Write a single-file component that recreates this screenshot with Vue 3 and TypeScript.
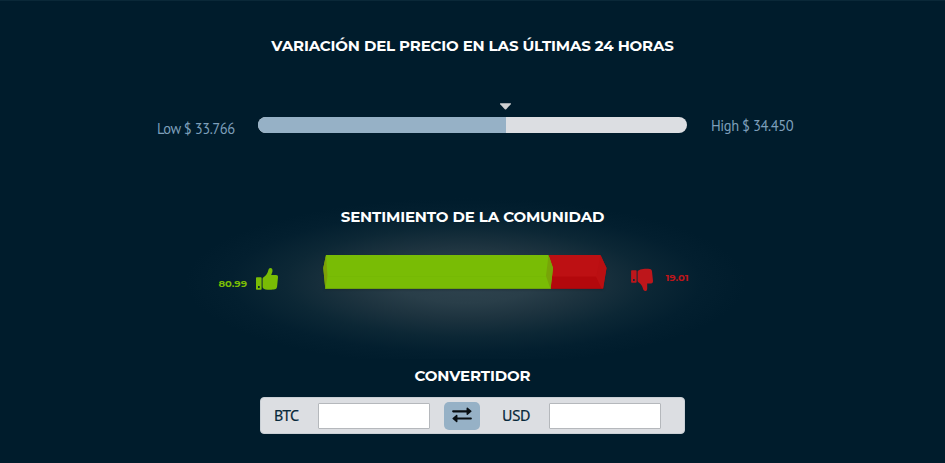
<script setup lang="ts">
import { ref } from 'vue'

const low = '33.766'
const high = '34.450'
const position = 57.8
const positive = '80.99'
const negative = '19.01'
const btc = ref('')
const usd = ref('')
</script>

<template>
  <main class="page">
    <section class="variation">
      <h2 class="title t-variation">VARIACIÓN DEL PRECIO EN LAS ÚLTIMAS 24 HORAS</h2>
      <div class="range">
        <span class="limit low">Low $ {{ low }}</span>
        <div class="track">
          <div class="fill" :style="{ width: position + '%' }"></div>
          <svg class="marker" :style="{ left: position + '%' }" width="12" height="7" viewBox="0 0 12 7">
            <path d="M.8.3h10.4q.6.3.1.9L6.7 6.2q-.7.6-1.4 0L.7 1.2Q.2.6.8.3z" fill="#cfd0d2" />
          </svg>
        </div>
        <span class="limit high">High $ {{ high }}</span>
      </div>
    </section>

    <section class="sentiment">
      <h2 class="title t-sentiment">SENTIMIENTO DE LA COMUNIDAD</h2>
      <div class="votes">
        <div class="vote up">
          <span class="percent">{{ positive }}</span>
          <svg width="24" height="24" viewBox="0 0 24 24">
            <path fill-rule="evenodd" d="M1.800 10.300h4q.8 0 .8.800v10.900q0 .8-.8.8h-4q-.8 0-.8-.8V11.100q0-.8.8-.8zM3 19v2h1.700V19z" />
            <path d="M7.600 11.900q0-1 .9-1.700C10.900 8.500 12.500 6.700 13.100 4 13.500 2.200 14.200 1 15.400 1c1.500 0 2.200 1.200 2.100 2.800-.1 1.700-.8 3-1.300 4.300h4.900c1.300 0 2 .9 1.900 2.200l-.9 9.100c-.2 1.600-1 2.500-2.300 2.900-2 .6-6.700.7-9.300.1-1.700-.4-2.900-1.100-2.900-2.300z" />
          </svg>
        </div>
        <svg class="prism" width="284" height="38" viewBox="0 0 284 38">
          <path d="M226 1h51.500l6 13-3.500 21H228z" fill="#bd1013" />
          <path d="M229 22.500h44l6 12.500h-51z" fill="#b3080c" />
          <path d="M277.500 1l6 13-3.500 21-6.500-13z" fill="#ba0f12" />
          <path d="M3 1h222.500l4.500 13-2.500 21H2.300L.3 14z" fill="#79bc05" />
          <path d="M3 1L.3 14l2 21L4.500 22z" fill="#7c9f09" />
          <path d="M225.500 1l4.500 13-2.500 21-4.500-13z" fill="#78a408" />
          <path d="M4 22.500h219" stroke="#76b805" stroke-width=".7" />
          <path d="M2.500 34.500h225.200" stroke="#6da30a" />
          <path d="M228 34.500h52" stroke="#9c0b12" />
        </svg>
        <div class="vote down">
          <svg width="24" height="24" viewBox="0 0 24 24">
            <path fill-rule="evenodd" d="M1.900 2.200h3.900q.8 0 .8.800v10.900q0 .8-.8.800H1.900q-.8 0-.8-.8V3q0-.8.8-.8zM3 11v2h1.700v-2z" />
            <path d="M7.600 3.700C7.600 2.600 9 1.900 10.400 1.400c2.600-.8 7-1 9.400-.4 1.400.3 2 1 2.200 2.400l1 9.600c.1 1.500-.6 2.400-2 2.400h-3.800v5c0 1.700-.7 2.600-2 2.600-1.200 0-1.900-.8-2.300-2.400-.6-2.500-1.700-4.600-4.200-6.100q-1.100-.7-1.100-1.800z" />
          </svg>
          <span class="percent">{{ negative }}</span>
        </div>
      </div>
    </section>

    <section class="converter">
      <h2 class="title t-converter">CONVERTIDOR</h2>
      <form class="exchange" @submit.prevent>
        <label class="btc" for="btc"><span>BTC</span></label>
        <input id="btc" v-model="btc" type="text" />
        <button type="button">
          <svg width="20" height="16" viewBox="0 0 20 16">
            <path d="M1.200 4.300h14M4.800 11.500h14" stroke="#080e12" stroke-width="2.200" stroke-linecap="round" />
            <path d="M15.300 1.300l3.500 3-3.500 3zM4.700 8.500l-3.500 3 3.500 3z" fill="#080e12" stroke="#080e12" stroke-width="1.500" stroke-linejoin="round" />
          </svg>
        </button>
        <label class="usd" for="usd"><span>USD</span></label>
        <input id="usd" v-model="usd" type="text" />
      </form>
    </section>
  </main>
</template>

<style>
body { margin: 0; background: #001c2c; }
</style>

<style scoped>
.page {
  box-sizing: border-box;
  width: 945px;
  height: 463px;
  overflow: hidden;
  background: #001c2c;
  border-top: 1px solid #0a2838;
}
.title {
  margin: 0;
  color: #fff;
  font: 700 15px/20px Montserrat, Inter, sans-serif;
  text-align: center;
  white-space: nowrap;
}
.variation { height: 179px; padding-top: 35px; box-sizing: border-box; }
.t-variation { letter-spacing: -.15px; }
.t-sentiment { letter-spacing: -.14px; }
.t-converter { letter-spacing: -.1px; }
.range { display: flex; padding-top: 61px; }
.limit {
  color: #7d9fba;
  font: 400 14.500px/20px "PT Sans", "Noto Sans", sans-serif;
  letter-spacing: -.42px;
  white-space: nowrap;
}
.low { width: 101px; padding: 2px 0 0 157px; }
.high { padding: 0 0 0 24px; margin-top: -1px; }
.track { position: relative; width: 429px; height: 16px; border-radius: 8px; background: #dcdee2; }
.fill { height: 16px; border-radius: 8px 0 0 8px; background: #96b1c6; }
.marker { position: absolute; top: -14px; transform: translateX(-6.500px); }
.sentiment {
  box-sizing: border-box;
  height: 179px;
  padding-top: 27px;
  background: radial-gradient(ellipse 280px 84px at 466px 102px, #2f434e 0%, #293e49 25%, #1d333f 43%, #0c2735 65%, #031f2f 84%, #001c2c 100%);
}
.votes { display: flex; align-items: flex-start; padding: 27px 0 0 218px; }
.vote { display: flex; }
.percent { font: 700 10px/14px Montserrat, Inter, sans-serif; }
.up { width: 105px; padding-top: 13px; color: #79bc05; fill: #79bc05; }
.up .percent { width: 37px; margin-top: 10px; }
.down { padding: 14px 0 0 23px; color: #bd161b; fill: #bd161b; }
.down .percent { margin: 3px 0 0 11px; }
.percent { transform: scaleY(.94) translateX(.4px); }
.prism { display: block; filter: drop-shadow(0 1px 1px #12212b70); }
.converter { padding-top: 7px; }
.exchange {
  box-sizing: border-box;
  display: flex;
  align-items: center;
  width: 425px;
  height: 37px;
  margin: 11px 0 0 260px;
  border: 1px solid #c9cfd5;
  border-radius: 4px;
  background: #dcdee2;
}
label { padding-bottom: 2px; color: #08283a; font: 400 16px/20px "PT Sans", "Noto Sans", sans-serif; letter-spacing: -.5px; -webkit-text-stroke: .2px #08283a; }
.btc { width: 44px; padding-left: 13px; }
.usd { width: 47px; padding-left: 22px; }
input { box-sizing: border-box; width: 112px; height: 26px; padding: 3px; border: 1px solid #b5b8bc; border-radius: 1px; background: #fff; outline: 0; }
button { display: flex; align-items: center; justify-content: center; width: 36px; height: 28px; margin-left: 14px; padding: 0 0 2px; border: 0; border-radius: 5px; background: #96b1c6; }
</style>
